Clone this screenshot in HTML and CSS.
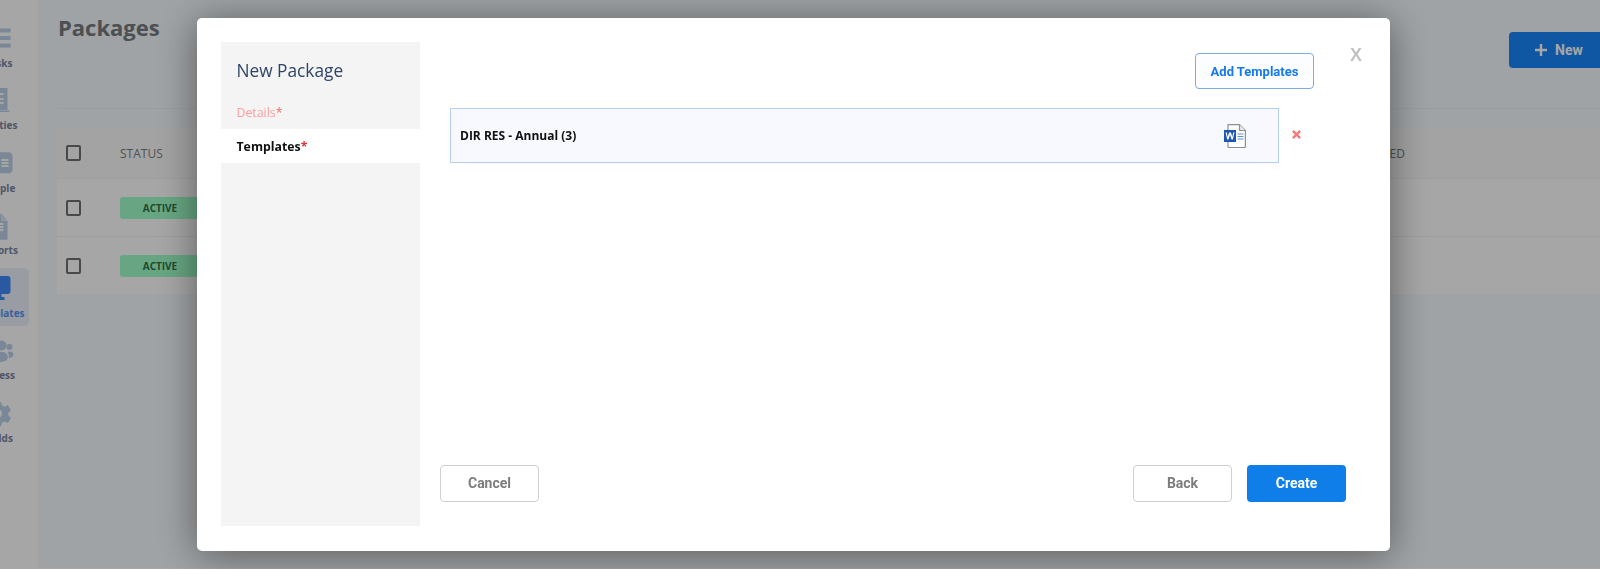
FILE: index.html
```html
<!DOCTYPE html>
<html lang="en">
<head>
<meta charset="utf-8">
<title>Packages</title>
<link rel="stylesheet" href="styles.css">
</head>
<body>
<div class="app">
  <nav class="sidebar">
    <a class="nav-item"><svg class="nav-icon" viewBox="0 0 26 26"><path d="M0 3.500h26v4H0zM0 11h26v4H0zM0 18.500h26v4H0z"/></svg><span>Tasks</span></a>
    <a class="nav-item"><svg class="nav-icon" viewBox="0 0 26 26"><path fill-rule="evenodd" d="M3 1h20v22H3zM13 6v2h6V6zM13 11v2h6v-2zM13 15v2h6v-2zM0 23.500h25v1.500H0z"/></svg><span>Entities</span></a>
    <a class="nav-item"><svg class="nav-icon" viewBox="0 0 26 26"><path fill-rule="evenodd" d="M6 2.300h18a4 4 0 0 1 4 4v13a4 4 0 0 1-4 4H6zM17 9v2h7V9zM17 12v2h7v-2zM17 15v2h7v-2z"/></svg><span>People</span></a>
    <a class="nav-item"><svg class="nav-icon" viewBox="0 0 26 26"><path fill-rule="evenodd" d="M2 2h15v7h6v18.700H2zM13 11v2h6v-2zM13 14v2h6v-2zM13 17v2h6v-2z"/><path d="M17.500 2l5.500 6.500h-5.500z" opacity=".6"/></svg><span>Reports</span></a>
    <a class="nav-item nav-item-active"><svg class="nav-icon" viewBox="0 0 26 26"><rect x="0" y="1" width="26" height="18" rx="3"/><path d="M10 19h7v3h3v3H6v-3h4z"/></svg><span>Templates</span></a>
    <a class="nav-item"><svg class="nav-icon" viewBox="0 0 26 26"><circle cx="17" cy="8.500" r="5"/><circle cx="25" cy="10" r="3"/><path d="M9 24c0-6 3-9 8-9s7 3 6 7c-1 3-11 4-14 2zM24 21c1-3 0-4-1-6 3-1 6 0 6 2.500 0 2-2 3.500-5 3.500z"/></svg><span>Access</span></a>
    <a class="nav-item"><svg class="nav-icon" viewBox="0 0 26 26"><path fill-rule="evenodd" d="M10.500 1.900h6l1 3.600 2.500 1.200 3.400-1.500 3 5.100-2.600 2.700v2.200l2.600 2.700-3 5.100-3.400-1.500-2.500 1.200-1 3.600h-6l-1-3.600-2.500-1.200-3.400 1.500-3-5.100 2.600-2.700v-2.200L0.600 10.300l3-5.100 3.400 1.500 2.500-1.200zM13.500 9.400a4 4 0 1 0 0 8 4 4 0 0 0 0-8z"/></svg><span>Fields</span></a>
  </nav>
  <main class="content">
    <header class="page-head">
      <h1 class="page-title">Packages</h1>
      <button class="btn-new" type="button"><svg class="plus" viewBox="0 0 12 12"><path d="M4.800 0h2.400v4.800H12v2.400H7.200V12H4.800V7.200H0V4.800h4.800z"/></svg>New</button>
    </header>
    <section class="table">
      <div class="row row-head">
        <span class="check"></span><span class="col-status">STATUS</span><span class="col-end">LAST UPDATED</span>
      </div>
      <div class="row row-one">
        <span class="check"></span><span class="badge">ACTIVE</span>
      </div>
      <div class="row row-two">
        <span class="check"></span><span class="badge">ACTIVE</span>
      </div>
    </section>
  </main>
</div>

<div class="backdrop">
  <div class="modal">
    <aside class="steps">
      <h2 class="steps-title">New Package</h2>
      <div class="step step-done">Details<b class="star">*</b></div>
      <div class="step step-current">Templates<b class="star">*</b></div>
    </aside>
    <div class="pane">
      <div class="pane-top">
        <button class="btn-add" type="button">Add Templates</button>
        <span class="close">X</span>
      </div>
      <div class="item-line">
        <div class="item">
          <span class="item-name">DIR RES - Annual (3)</span>
          <svg class="word" viewBox="0 0 22 24">
            <path d="M4 .6h11.500L21.400 6.500v16a1 1 0 0 1-1 1H5a1 1 0 0 1-1-1z" fill="#fff" stroke="#8f8f8f" stroke-width="1.200"/>
            <path d="M15.500 .6v5.900h5.900" fill="#e8e8e8" stroke="#8f8f8f" stroke-width="1.200"/>
            <path d="M13.500 10h6M13.500 12.500h6M13.500 15h6" stroke="#5b8fd6" stroke-width="1.200"/>
            <rect x="0" y="6" width="12" height="12" fill="#1c56b5"/>
            <path d="M1.500 8.500l1.700 7h1.300l1.500-4.800 1.500 4.800h1.300l1.700-7H9.200l-.9 4.600L7 8.500H5l-1.300 4.600-.9-4.600z" fill="#fff"/>
          </svg>
        </div>
        <svg class="remove" viewBox="0 0 10 10"><path d="M1 1l8 8M9 1l-8 8" stroke="#f87878" stroke-width="2.600"/></svg>
      </div>
      <footer class="actions">
        <button class="btn btn-plain" type="button">Cancel</button>
        <div class="actions-right">
          <button class="btn btn-plain" type="button">Back</button>
          <button class="btn btn-primary" type="button">Create</button>
        </div>
      </footer>
    </div>
  </div>
</div>
</body>
</html>
```
FILE: styles.css
```css
* { box-sizing: border-box; }
html, body { margin: 0; height: 569px; overflow: hidden; }
body { background: #fff; font-family: "Open Sans", sans-serif; }

.app { display: flex; height: 568px; overflow: hidden; background: #f5fafd; }

.sidebar {
  flex: none;
  width: 80px;
  margin-left: -43px;
  padding-top: 18px;
  background: #fff;
  display: flex;
  flex-direction: column;
}
.nav-item {
  width: 72px;
  height: 58px;
  margin-bottom: 4.6px;
  padding: 6.5px 0 0 11px;
  flex: none;
  display: flex;
  flex-direction: column;
  align-items: center;
  gap: 5px;
  border-radius: 5px;
  color: #7b84a0;
  font-size: 10px;
  font-weight: 700;
  line-height: 14px;
}
.nav-item-active { background: #ebf0fb; color: #5a96f5; }
.nav-icon { width: 26px; height: 26px; fill: #bcd0e6; flex: none; overflow: visible; transform: translateX(-1.500px); }
.nav-item-active .nav-icon { fill: #3f8af8; }

.content { flex: 1; min-width: 0; padding: 0 0 0 20px; }
.page-head {
  height: 109px;
  display: flex;
  justify-content: space-between;
  align-items: flex-start;
  border-bottom: 1px solid #eef3f6;
}
.page-title {
  margin: 12px 0 0 1px;
  font-size: 22px;
  line-height: 30px;
  font-weight: 700;
  color: #777a7e;
}
.btn-new {
  flex: none;
  margin: 32px -9px 0 0;
  width: 100px;
  height: 36px;
  padding: 0 0 0 26px;
  border: 0;
  border-radius: 4px;
  background: #1786fa;
  display: flex;
  align-items: center;
  gap: 8px;
  font: 700 14px Roboto, sans-serif;
  color: #fff;
}
.plus { width: 12px; height: 12px; fill: #fff; }

.table { margin-top: 19px; }
.row { display: flex; align-items: center; padding-left: 9px; background: #fff; }
.row-head { height: 50px; background: #fbfbfb; }
.row-one { height: 58px; border-top: 1px solid #f3f3f3; }
.row-two { height: 58px; border-top: 1px solid #f3f3f3; }
.check {
  flex: none;
  width: 15px;
  height: 16px;
  border: 2px solid #707070;
  border-radius: 2px;
  margin-right: 39px;
}
.col-status { font-size: 12px; color: #7c7c7c; }
.col-end { margin-left: auto; padding-right: 195px; font-size: 12px; color: #7c7c7c; }
.badge {
  width: 80px;
  height: 22px;
  border-radius: 3px;
  background: #a0ffc9;
  color: #2f7249;
  font-size: 10px;
  font-weight: 700;
  line-height: 22px;
  text-align: center;
}

.backdrop {
  position: fixed;
  inset: 0;
  background: rgba(0, 0, 0, .35);
  padding: 18px 210px 18px 197px;
}
.modal {
  width: 1193px;
  height: 533px;
  padding: 24px 43px 25px 24px;
  display: flex;
  background: #fff;
  border-radius: 5px;
  box-shadow: 0 4px 40px rgba(0, 0, 0, .45);
}
.steps { flex: none; width: 199px; background: #f4f4f4; }
.steps-title {
  margin: 0;
  padding: 16px 15.500px 0;
  font-size: 17.300px;
  line-height: 25px;
  font-weight: 400;
  color: #2e4469;
}
.step { height: 34px; padding: 0 15.500px; font-size: 12.300px; line-height: 36px; }
.step-done { margin-top: 12px; color: #ff9c9c; }
.step-current { background: #fff; color: #111; font-weight: 700; }
.star { color: #e03535; font-weight: 700; }
.step-done .star { color: #f06a6a; font-weight: 400; }

.pane {
  flex: 1;
  min-width: 0;
  padding-left: 20px;
  display: flex;
  flex-direction: column;
}
.pane-top { height: 66px; padding-top: 11px; margin-right: -43px; display: flex; align-items: flex-start; }
.btn-add {
  flex: none;
  margin-left: 755px;
  width: 119px;
  height: 36px;
  background: #fbfdff;
  border: 1px solid #7fa9ea;
  border-radius: 4px;
  color: #1679eb;
  font: 700 13px Roboto, sans-serif;
  padding: 0;
}
.close {
  flex: none;
  margin-left: 36px;
  margin-top: -10px;
  font: 700 18px/25px "Liberation Sans", sans-serif;
  color: #c2c2c2;
}
.item-line { margin-left: 10px; display: flex; align-items: center; }
.item {
  flex: none;
  width: 829px;
  height: 55px;
  padding: 0 32px 0 9px;
  display: flex;
  align-items: center;
  justify-content: space-between;
  background: #f8f9fe;
  border: 1px solid #b5cff3;
}
.item-name { font-size: 12px; font-weight: 700; color: #111; }
.word { width: 22px; height: 24px; }
.remove { flex: none; width: 9px; height: 9px; margin-left: 13px; margin-top: -2px; }

.actions { margin-top: auto; margin-bottom: 24px; display: flex; justify-content: space-between; }
.actions-right { display: flex; gap: 15px; padding-right: 1px; }
.btn {
  width: 99px;
  height: 37px;
  border-radius: 4px;
  font: 700 14px Roboto, sans-serif;
  padding: 0 0 2px;
}
.btn-plain { background: #fff; border: 1px solid #d0d0d0; color: #7d7d7d; }
.btn-primary { background: #107ee8; border: 0; color: #fff; }
```
